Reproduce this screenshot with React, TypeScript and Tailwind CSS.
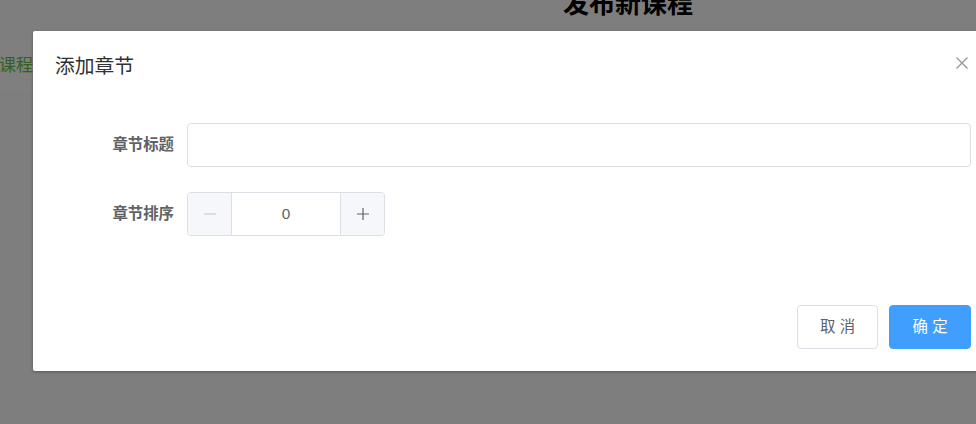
import React from 'react'

const font = "font-['Liberation_Sans','Noto_Sans_CJK_SC',sans-serif]"

// Background page behind the modal
const PageBehind = () => (
  <div className="w-full">
    <div className="-mt-[9px] pl-[563px] h-[26px] text-[26px] leading-[26px] font-bold text-black whitespace-nowrap">
      发布新课程
    </div>
    <div className="mt-[23px] h-[52px] w-[420px] bg-white flex items-center">
      <span className="-ml-[18px] text-[17px] text-[#67c23a] whitespace-nowrap">新课程</span>
    </div>
  </div>
)

const CloseIcon = () => (
  <svg width="12" height="12" viewBox="0 0 12 12" className="block">
    <path d="M0.5 0.5 L11.5 11.5 M11.5 0.5 L0.5 11.5" stroke="#909399" strokeWidth="1.2" />
  </svg>
)

const NumberInput = ({ value }: { value: number }) => (
  <div className="w-[198px] h-[44px] border border-[#dcdfe6] rounded-[4px] flex overflow-hidden">
    <div className="w-[44px] bg-[#f5f7fa] border-r border-[#dcdfe6] flex items-center justify-center">
      <svg width="14" height="14" viewBox="0 0 14 14">
        <path d="M1 7 H13" stroke="#c0c4cc" strokeWidth="1.2" />
      </svg>
    </div>
    <div className="flex-1 flex items-center justify-center text-[15.4px] text-[#606266]">{value}</div>
    <div className="w-[44px] bg-[#f5f7fa] border-l border-[#dcdfe6] flex items-center justify-center">
      <svg width="14" height="14" viewBox="0 0 14 14">
        <path d="M1 7 H13 M7 1 V13" stroke="#606266" strokeWidth="1.2" />
      </svg>
    </div>
  </div>
)

const FormRow = ({ label, children }: { label: string; children: React.ReactNode }) => (
  <div className="flex items-center">
    <label className="w-[132px] pr-[13px] text-right text-[15.4px] font-bold text-[#606266] whitespace-nowrap">
      {label}
    </label>
    <div className="flex-1">{children}</div>
  </div>
)

export default function App() {
  return (
    <div className={`relative w-[976px] h-[424px] overflow-hidden bg-[#fcfcfc] ${font}`}>
      <PageBehind />

      {/* modal mask */}
      <div className="absolute inset-0 bg-black/50" />

      {/* dialog */}
      <div className="absolute left-[33px] top-[31px] w-[960px] bg-white rounded-[2px] shadow-[0_1px_3px_rgba(0,0,0,0.3)]">
        <div className="relative px-[22px] pt-[22px] pb-[11px]">
          <span className="text-[19.8px] leading-[26.4px] text-[#303133]">添加章节</span>
          <button className="absolute top-[26px] right-[25px]">
            <CloseIcon />
          </button>
        </div>

        <div className="px-[22px] pt-[32px] pb-[58px] flex flex-col gap-[25px]">
          <FormRow label="章节标题">
            <input className="w-full h-[44px] border border-[#dcdfe6] rounded-[4px] px-[15px] outline-none text-[15.4px] text-[#606266]" />
          </FormRow>
          <FormRow label="章节排序">
            <NumberInput value={0} />
          </FormRow>
        </div>

        <div className="px-[22px] pt-[11px] pb-[22px] flex justify-end gap-[11px]">
          <button className="w-[81px] h-[44px] border border-[#dcdfe6] rounded-[4px] bg-white text-[15.4px] text-[#606266]">
            取 消
          </button>
          <button className="w-[82px] h-[44px] border border-[#409eff] rounded-[4px] bg-[#409eff] text-[15.4px] text-white">
            确 定
          </button>
        </div>
      </div>
    </div>
  )
}
